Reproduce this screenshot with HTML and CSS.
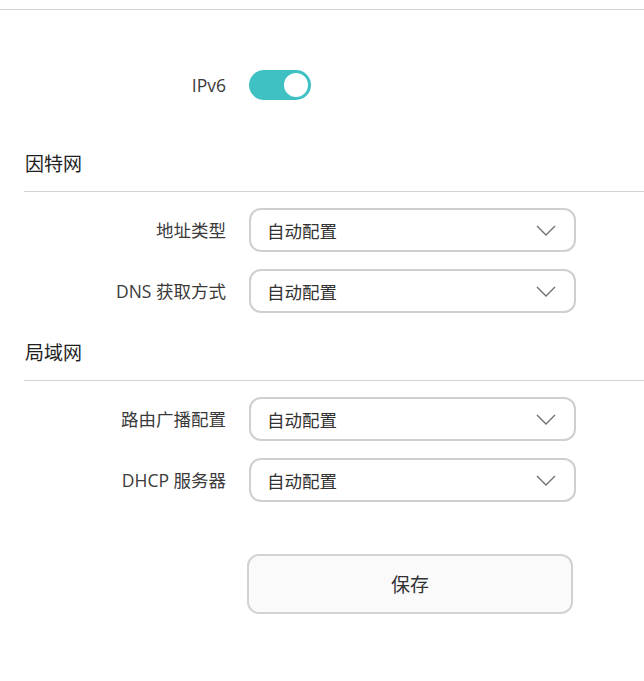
FILE: index.html
```html
<!DOCTYPE html>
<html lang="zh-CN">
<head>
<meta charset="utf-8">
<title>IPv6</title>
<link rel="stylesheet" href="styles.css">
</head>
<body>
<div class="topbar"></div>

<div class="row toggle-row">
  <label class="label">IPv6</label>
  <div class="switch"><span class="knob"></span></div>
</div>

<h2 class="section">因特网</h2>
<div class="rows">
  <div class="row">
    <label class="label">地址类型</label>
    <div class="select"><span>自动配置</span>
      <svg class="chev" width="20" height="11" viewBox="0 0 20 11"><path d="M1 1 L10 10 L19 1" fill="none" stroke="#707070" stroke-width="1.4"/></svg>
    </div>
  </div>
  <div class="row">
    <label class="label">DNS 获取方式</label>
    <div class="select"><span>自动配置</span>
      <svg class="chev" width="20" height="11" viewBox="0 0 20 11"><path d="M1 1 L10 10 L19 1" fill="none" stroke="#707070" stroke-width="1.4"/></svg>
    </div>
  </div>
</div>

<h2 class="section section2">局域网</h2>
<div class="rows">
  <div class="row">
    <label class="label">路由广播配置</label>
    <div class="select"><span>自动配置</span>
      <svg class="chev" width="20" height="11" viewBox="0 0 20 11"><path d="M1 1 L10 10 L19 1" fill="none" stroke="#707070" stroke-width="1.4"/></svg>
    </div>
  </div>
  <div class="row">
    <label class="label">DHCP 服务器</label>
    <div class="select"><span>自动配置</span>
      <svg class="chev" width="20" height="11" viewBox="0 0 20 11"><path d="M1 1 L10 10 L19 1" fill="none" stroke="#707070" stroke-width="1.4"/></svg>
    </div>
  </div>
</div>

<button class="save">保存</button>
</body>
</html>
```

FILE: styles.css
```css
html, body {
  margin: 0;
  padding: 0;
  background: #ffffff;
}
body {
  font-family: "Open Sans", "Noto Sans CJK SC", sans-serif;
  color: #333333;
  width: 644px;
}
.topbar {
  height: 9px;
  border-bottom: 1px solid #d4d4d4;
}
.row {
  display: flex;
  align-items: center;
  gap: 23px;
}
.label {
  width: 226px;
  text-align: right;
  font-size: 17.5px;
  line-height: 24px;
  color: #3a3a3a;
}
.toggle-row {
  margin-top: 60px;
  height: 30px;
}
.switch {
  width: 62px;
  height: 30px;
  border-radius: 15px;
  background: #3fc1c4;
  display: flex;
  align-items: center;
  justify-content: flex-end;
  padding-right: 3px;
  box-sizing: border-box;
}
.knob {
  width: 24px;
  height: 24px;
  border-radius: 50%;
  background: #ffffff;
}
.section {
  margin: 51px 0 0 24px;
  padding: 0 0 14px 1px;
  height: 26px;
  line-height: 26px;
  font-size: 19px;
  font-weight: normal;
  color: #1e1e1e;
  border-bottom: 1px solid #d4d4d4;
}
.section2 {
  margin-top: 27px;
}
.rows {
  margin-top: 16px;
  display: flex;
  flex-direction: column;
  gap: 17px;
}
.rows .row {
  height: 44px;
}
.select {
  width: 327px;
  height: 44px;
  box-sizing: border-box;
  border: 2px solid #cfcfcf;
  border-radius: 12px;
  display: flex;
  align-items: center;
  justify-content: space-between;
  padding: 0 18px 0 16px;
  font-size: 17.5px;
  color: #333333;
}
.chev {
  display: block;
}
.save {
  display: block;
  margin: 52px 0 0 247px;
  width: 326px;
  height: 60px;
  box-sizing: border-box;
  border: 2px solid #d2d2d2;
  border-radius: 12px;
  background: #fafafa;
  font-family: "Open Sans", "Noto Sans CJK SC", sans-serif;
  font-size: 19px;
  color: #333333;
  padding: 0;
}
```
